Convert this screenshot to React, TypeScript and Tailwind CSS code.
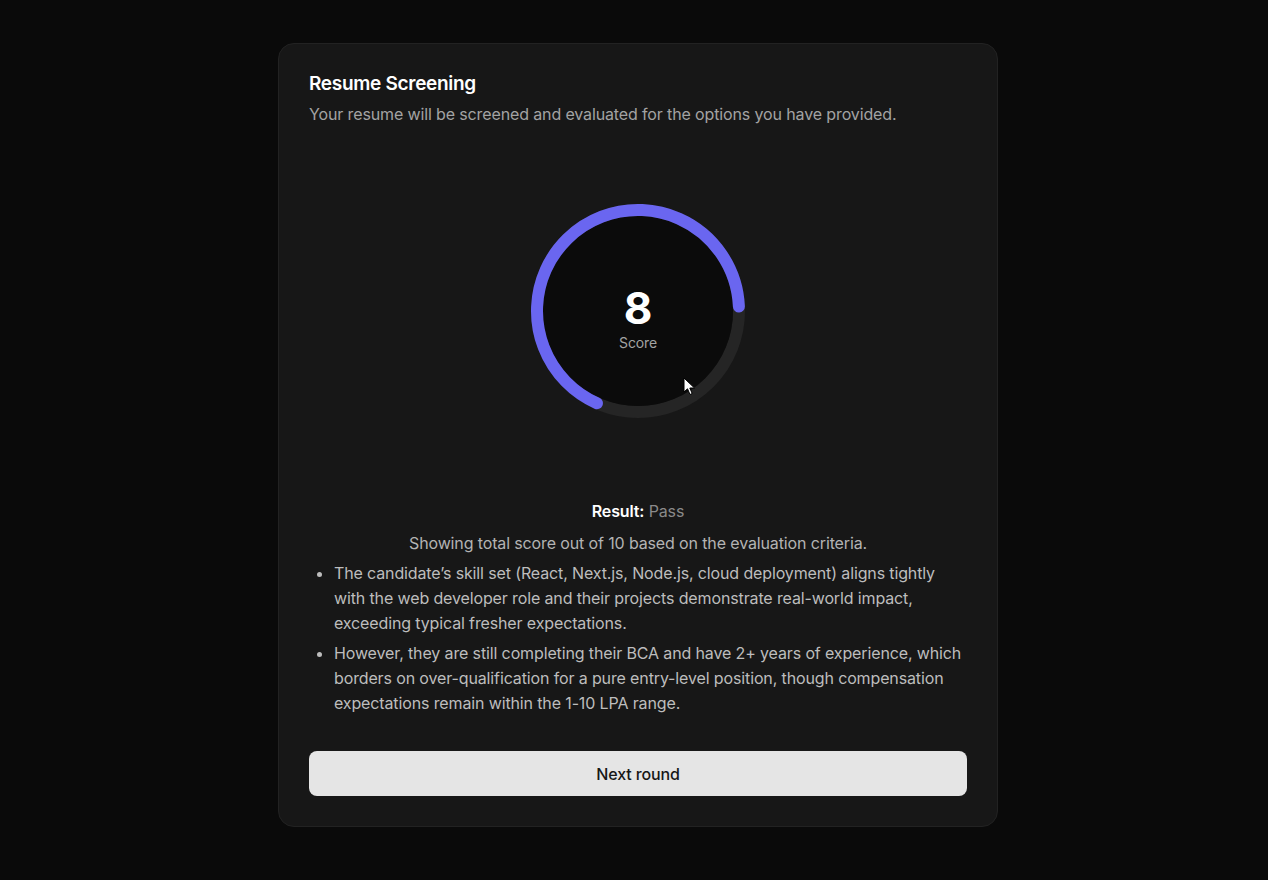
import React from 'react';

const R = 101;
const C = 2 * Math.PI * R;

function ScoreRing({ score }: { score: number }) {
  const arc = (C * 243) / 360;
  return (
    <div className="relative w-[216px] h-[216px]">
      <svg width="216" height="216" viewBox="0 0 216 216">
        <circle cx="108" cy="108" r={R} fill="none" stroke="#252525" strokeWidth="12" />
        <circle cx="108" cy="108" r="95" fill="#0b0b0b" />
        <circle
          cx="108"
          cy="108"
          r={R}
          fill="none"
          stroke="#6a66f0"
          strokeWidth="12"
          strokeLinecap="round"
          strokeDasharray={`${arc} ${C}`}
          transform="rotate(114 108 108)"
        />
      </svg>
      <div className="absolute inset-0 flex flex-col items-center justify-center pt-[15px]">
        <span className="text-[44px] leading-[46px] font-bold text-white">{score}</span>
        <span className="text-sm leading-5 text-[#a3a3a3] mt-[2px]">Score</span>
      </div>
      {/* mouse pointer captured in screenshot */}
      <svg className="absolute left-[153px] top-[174px]" width="13" height="20" viewBox="0 0 13 20">
        <path d="M1 1 L1 15 L4.5 11.8 L7 17.5 L9.2 16.5 L6.8 11 L11.5 11 Z" fill="#fff" stroke="#000" strokeWidth="1" />
      </svg>
    </div>
  );
}

export default function App() {
  return (
    <div
      className="h-screen w-full overflow-hidden bg-[#0a0a0a] flex justify-center pt-[43px] pl-[8px]"
      style={{ fontFamily: 'Inter, "Noto Sans", sans-serif' }}
    >
      <div className="w-[720px] h-[784px] bg-[#171717] border border-[#222222] rounded-2xl px-[30px] pt-[26px] pb-[30px] flex flex-col tracking-[-0.13px]">
        <h1 className="text-[19px] leading-7 font-semibold text-white tracking-[-0.3px]">Resume Screening</h1>
        <p className="mt-1 text-base leading-6 text-[#a3a3a3]">
          Your resume will be screened and evaluated for the options you have provided.
        </p>

        <div className="flex justify-center mt-[77px]">
          <ScoreRing score={8} />
        </div>

        <div className="mt-[80px] text-center text-base leading-6">
          <span className="font-semibold text-white">Result:</span>{' '}
          <span className="text-[#8a8a8a]">Pass</span>
        </div>
        <p className="mt-2 text-center text-base leading-6 text-[#b3b3b3]">
          Showing total score out of 10 based on the evaluation criteria.
        </p>
        <ul className="mt-[6px] list-disc pl-[25px] text-base leading-[25px] text-[#bdbdbd] space-y-[5px] marker:text-[#bdbdbd]">
          <li>
            The candidate’s skill set (React, Next.js, Node.js, cloud deployment) aligns tightly with the web developer
            role and their projects demonstrate real-world impact, exceeding typical fresher expectations.
          </li>
          <li>
            However, they are still completing their BCA and have 2+ years of experience, which borders on
            over-qualification for a pure entry-level position, though compensation expectations remain within the
            1-10 LPA range.
          </li>
        </ul>

        <button className="mt-auto h-[45px] w-full rounded-lg bg-[#e5e5e5] text-base font-medium text-[#171717]">
          Next round
        </button>
      </div>
    </div>
  );
}
